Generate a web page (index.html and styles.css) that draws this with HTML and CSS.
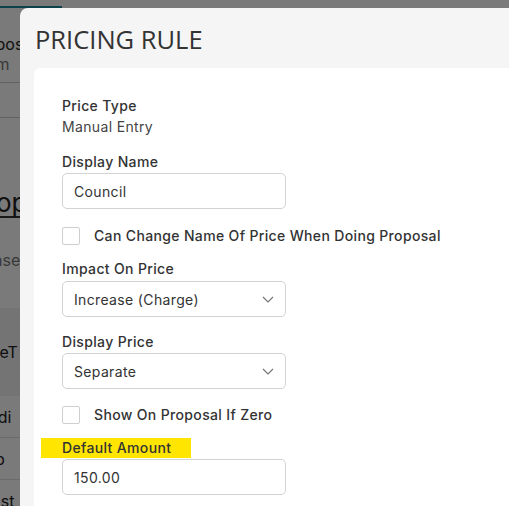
FILE: index.html
```html
<!DOCTYPE html>
<html>
<head>
<meta charset="utf-8">
<link rel="stylesheet" href="styles.css">
</head>
<body>
<div class="page">
  <div class="bg-top"><div class="bg-tab"></div></div>
  <div class="bg-head">
    <div class="bg-title">Propos</div>
    <div class="bg-desc">for m</div>
  </div>
  <div class="bg-row bg-empty"></div>
  <div class="bg-inc">Inc</div>
  <div class="bg-h2"><span>Prop</span></div>
  <div class="bg-para">
    <div>Please c</div>
    <div>rule</div>
  </div>
  <div class="bg-thead">PriceT</div>
  <div class="bg-tr">Buildi</div>
  <div class="bg-tr">Club</div>
  <div class="bg-tr bg-last">Const</div>
</div>
<div class="overlay"></div>
<div class="modal">
  <div class="modal-header">PRICING RULE</div>
  <div class="card">
    <div class="label">Price Type</div>
    <div class="value">Manual Entry</div>

    <div class="label mt">Display Name</div>
    <div class="field">Council</div>

    <div class="check-row">
      <span class="checkbox"></span>
      <span class="check-label">Can Change Name Of Price When Doing Proposal</span>
    </div>

    <div class="label mt2">Impact On Price</div>
    <div class="field select">
      <span>Increase (Charge)</span>
      <svg class="chev" width="12" height="7" viewBox="0 0 12 7"><path d="M1 1 L6 6 L11 1" fill="none" stroke="#757575" stroke-width="1.2"/></svg>
    </div>

    <div class="label mt">Display Price</div>
    <div class="field select">
      <span>Separate</span>
      <svg class="chev" width="12" height="7" viewBox="0 0 12 7"><path d="M1 1 L6 6 L11 1" fill="none" stroke="#757575" stroke-width="1.2"/></svg>
    </div>

    <div class="check-row cr2">
      <span class="checkbox"></span>
      <span class="check-label">Show On Proposal If Zero</span>
    </div>

    <div class="label highlight">Default Amount</div>
    <div class="field">150.00</div>
  </div>
</div>
</body>
</html>
```

FILE: styles.css
```css
html, body {
  margin: 0;
  padding: 0;
}
body {
  width: 509px;
  height: 506px;
  overflow: hidden;
  position: relative;
  background: #fff;
  font-family: "Inter", "Noto Sans", sans-serif;
}
.page {
  width: 120px;
  margin-left: -30px;
  font-size: 16px;
  color: #222;
}
.bg-top {
  height: 8px;
  background: #fff;
}
.bg-tab {
  width: 92px;
  height: 6px;
  border-bottom: 2px solid #1a8d9c;
}
.bg-head {
  height: 75px;
  border-bottom: 1px solid #ccc;
  box-sizing: border-box;
  padding-top: 26px;
  line-height: 20px;
}
.bg-title { color: #222; }
.bg-desc { color: #777; }
.bg-empty {
  height: 35px;
  border-bottom: 1px solid #ccc;
  box-sizing: border-box;
}
.bg-inc {
  height: 40px;
  line-height: 38px;
  padding-left: 2px;
}
.bg-h2 {
  height: 57px;
  padding-top: 30px;
  box-sizing: border-box;
  font-size: 26px;
  line-height: 30px;
}
.bg-h2 span {
  display: inline-block;
  border-bottom: 2px solid #333;
  line-height: 26px;
}
.bg-para {
  height: 93px;
  padding-top: 35px;
  box-sizing: border-box;
  color: #777;
  line-height: 20px;
}
.bg-thead {
  height: 88px;
  line-height: 88px;
  background: #f3f3f3;
  box-sizing: border-box;
}
.bg-tr {
  height: 42px;
  line-height: 42px;
  border-bottom: 1px solid #ddd;
  box-sizing: border-box;
}
.bg-last { border-bottom: 0; }

.overlay {
  position: absolute;
  inset: 0;
  background: rgba(0, 0, 0, 0.52);
}

.modal {
  position: absolute;
  left: 20px;
  top: 8px;
  width: 520px;
  height: 540px;
  background: #f5f5f5;
  border-radius: 8px 0 0 0;
}
.modal-header {
  height: 60px;
  box-sizing: border-box;
  padding: 13px 0 0 15px;
  font-family: "Open Sans", sans-serif;
  font-size: 25.5px;
  line-height: 36px;
  color: #333;
}
.card {
  margin-left: 14px;
  background: #fff;
  border-radius: 6px 0 0 0;
  padding: 27px 28px;
  height: 500px;
  color: #333;
  font-size: 14px;
  letter-spacing: 0.35px;
}
.label {
  font-weight: 500;
  line-height: 21px;
  color: #333;
}
.value {
  line-height: 21px;
  color: #444;
}
.mt { margin-top: 14px; }
.mt2 { margin-top: 12px; }
.field {
  margin-top: 1px;
  width: 224px;
  height: 36px;
  box-sizing: border-box;
  border: 1px solid #d2d2d2;
  border-radius: 5px;
  padding: 0 11px;
  display: flex;
  align-items: center;
  color: #333;
}
.select {
  justify-content: space-between;
}
.mt2 + .select { margin-top: 2px; }
.check-row {
  margin-top: 17px;
  height: 20px;
  display: flex;
  align-items: center;
  gap: 14px;
}
.cr2 { margin-top: 16px; }
.checkbox {
  width: 16px;
  height: 16px;
  border: 1px solid #cfcfcf;
  border-radius: 2px;
  flex: none;
}
.check-label {
  font-weight: 500;
  color: #333;
  line-height: 20px;
}
.highlight {
  margin-top: 13px;
  margin-left: -21px;
  padding-left: 21px;
  width: 129px;
  height: 20px;
  line-height: 20px;
  background: #ffe500;
}
```
